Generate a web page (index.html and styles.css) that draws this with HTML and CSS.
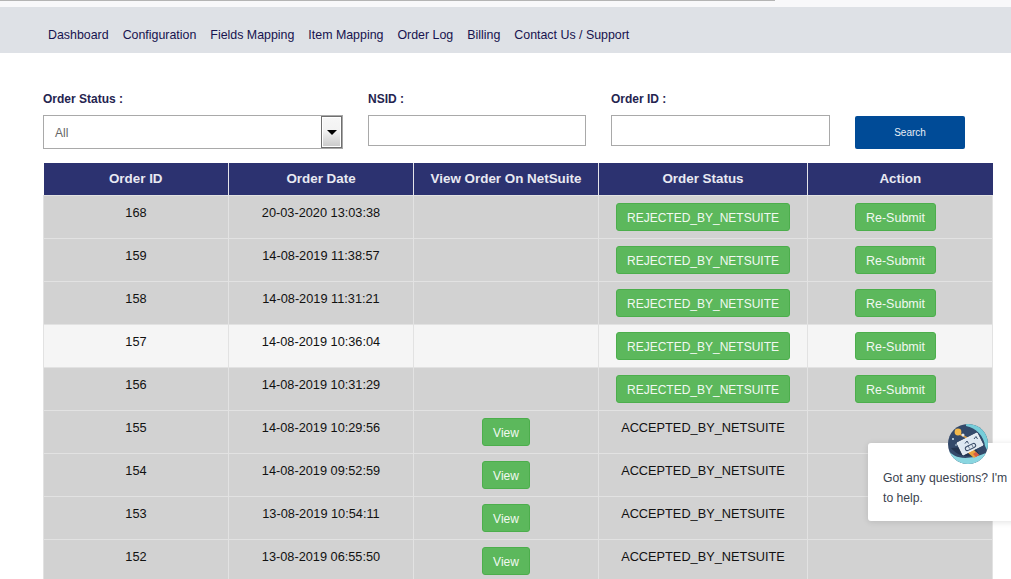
FILE: index.html
```html
<!DOCTYPE html>
<html lang="en">
<head>
<meta charset="utf-8">
<title>Order Log</title>
<link rel="stylesheet" href="styles.css">
</head>
<body>
<div class="topstrip"><div class="topline"></div></div>
<nav class="nav">
  <a>Dashboard</a><a>Configuration</a><a>Fields Mapping</a><a>Item Mapping</a><a>Order Log</a><a>Billing</a><a>Contact Us / Support</a>
</nav>
<main class="main">
  <form class="filters">
    <div class="field f-status">
      <label>Order Status :</label>
      <div class="select"><span class="select-val">All</span><span class="select-btn"><i class="arrow"></i></span></div>
    </div>
    <div class="field f-nsid">
      <label>NSID :</label>
      <div class="input"></div>
    </div>
    <div class="field f-order">
      <label>Order ID :</label>
      <div class="input"></div>
    </div>
    <div class="btn-search">Search</div>
  </form>
  <table class="orders">
    <colgroup><col class="c1"><col class="c2"><col class="c3"><col class="c4"><col class="c5"></colgroup>
    <thead><tr><th>Order ID</th><th>Order Date</th><th>View Order On NetSuite</th><th>Order Status</th><th>Action</th></tr></thead>
    <tbody>
      <tr><td>168</td><td>20-03-2020 13:03:38</td><td></td><td class="b"><span class="btn wide">REJECTED_BY_NETSUITE</span></td><td class="b"><span class="btn resub">Re-Submit</span></td></tr>
      <tr><td>159</td><td>14-08-2019 11:38:57</td><td></td><td class="b"><span class="btn wide">REJECTED_BY_NETSUITE</span></td><td class="b"><span class="btn resub">Re-Submit</span></td></tr>
      <tr><td>158</td><td>14-08-2019 11:31:21</td><td></td><td class="b"><span class="btn wide">REJECTED_BY_NETSUITE</span></td><td class="b"><span class="btn resub">Re-Submit</span></td></tr>
      <tr class="hover"><td>157</td><td>14-08-2019 10:36:04</td><td></td><td class="b"><span class="btn wide">REJECTED_BY_NETSUITE</span></td><td class="b"><span class="btn resub">Re-Submit</span></td></tr>
      <tr><td>156</td><td>14-08-2019 10:31:29</td><td></td><td class="b"><span class="btn wide">REJECTED_BY_NETSUITE</span></td><td class="b"><span class="btn resub">Re-Submit</span></td></tr>
      <tr><td>155</td><td>14-08-2019 10:29:56</td><td class="b"><span class="btn view">View</span></td><td>ACCEPTED_BY_NETSUITE</td><td></td></tr>
      <tr><td>154</td><td>14-08-2019 09:52:59</td><td class="b"><span class="btn view">View</span></td><td>ACCEPTED_BY_NETSUITE</td><td></td></tr>
      <tr><td>153</td><td>13-08-2019 10:54:11</td><td class="b"><span class="btn view">View</span></td><td>ACCEPTED_BY_NETSUITE</td><td></td></tr>
      <tr><td>152</td><td>13-08-2019 06:55:50</td><td class="b"><span class="btn view">View</span></td><td>ACCEPTED_BY_NETSUITE</td><td></td></tr>
    </tbody>
  </table>
</main>
<aside class="chat">
  <svg class="avatar" viewBox="0 0 40 40" width="40" height="40" aria-hidden="true">
    <defs><clipPath id="av"><circle cx="20" cy="20" r="20"/></clipPath></defs>
    <g clip-path="url(#av)">
      <rect width="40" height="40" fill="#33496a"/>
      <path d="M18 0H40V28L37 22C36 12 28 4 18 2Z" fill="#76cdd9"/>
      <path d="M0 26C6 34 18 38 40 28V40H0Z" fill="#8ad6e0"/>
      <path d="M3 24C9 31 18 35 31 30L26 22Z" fill="#233450"/>
      <path d="M19 28L26 34L31 31L25 25Z" fill="#e8a23c"/>
      <path d="M25 30L28 33L31 31L28 28Z" fill="#d85b43"/>
      <path d="M10 9L19 14" stroke="#d09a4c" stroke-width="2"/>
      <circle cx="10" cy="8" r="3.400" fill="#f2b84b"/>
      <circle cx="15" cy="11" r="1.500" fill="#e3e9ee"/>
      <path d="M9 19L29 9L35 21L15 31Z" fill="#dde7f1" stroke="#f6f9fb" stroke-width="1" stroke-linejoin="round"/>
      <path d="M17 19.500l2-2.500 1.500 2.500M26 15l2-2.500 1.500 2.500" stroke="#3a4d69" stroke-width="1" fill="none"/>
      <rect x="17" y="21" width="11" height="4" rx="2" fill="none" stroke="#3a4d69" stroke-width="1" transform="rotate(-26 22.500 23)"/>
      <path d="M20 21.500l1.500 3M23.500 20l1.500 3" stroke="#3a4d69" stroke-width=".7"/>
      <circle cx="5" cy="15" r="1" fill="#cfe4ee"/>
      <circle cx="8" cy="21" r=".8" fill="#cfe4ee"/>
    </g>
  </svg>
  <p class="chat-text">Got any questions? I'm<br>to help.</p>
</aside>
</body>
</html>
```

FILE: styles.css
```css
html, body {
  margin: 0;
  padding: 0;
  height: 579px;
  overflow: hidden;
  background: #fff;
  font-family: "Liberation Sans", Arial, sans-serif;
  color: #111;
}
.topstrip {
  height: 7px;
  background: #f8f8fa;
}
.topline {
  width: 775px;
  height: 1px;
  background: #b4b4b4;
}
.nav {
  box-sizing: border-box;
  height: 46px;
  background: #dee1e6;
  display: flex;
  align-items: center;
  gap: 14px;
  padding: 9px 0 0 48px;
  font-size: 12.4px;
  color: #17134f;
}
.main {
  padding: 38px 18px 0 43px;
}
.filters {
  display: flex;
  align-items: flex-start;
  height: 72px;
}
.field label {
  display: block;
  height: 24px;
  line-height: 16px;
  font-size: 12px;
  font-weight: bold;
  color: #25244f;
}
.f-status { width: 325px; }
.f-nsid { width: 243px; }
.f-order { width: 244px; }
.select {
  box-sizing: border-box;
  width: 300px;
  height: 34px;
  border: 1px solid #a9a9a9;
  display: flex;
  justify-content: space-between;
  align-items: stretch;
}
.select-val {
  padding-left: 11px;
  line-height: 35px;
  font-size: 12px;
  color: #666;
}
.select-btn {
  box-sizing: border-box;
  width: 21px;
  border: 1px solid #6f6f6f;
  border-top-width: 2px;
  outline: 1px solid #fff;
  outline-offset: -2px;
  background: linear-gradient(#f6f6f6, #f2f2f2 45%, #c9c9c9);
  display: flex;
  justify-content: center;
  padding-top: 12px;
}
.arrow {
  width: 0;
  height: 0;
  border-left: 5px solid transparent;
  border-right: 5px solid transparent;
  border-top: 5px solid #000;
}
.input {
  box-sizing: border-box;
  height: 31px;
  border: 1px solid #a9a9a9;
}
.f-nsid .input { width: 218px; }
.f-order .input { width: 219px; }
.btn-search {
  margin-top: 25px;
  width: 110px;
  height: 33px;
  line-height: 33px;
  text-align: center;
  background: #004b97;
  border-radius: 2px;
  color: #e8eef6;
  font-size: 10px;
}
.orders {
  table-layout: fixed;
  border-collapse: collapse;
  width: 950px;
  font-size: 12.75px;
}
.c1, .c2, .c3, .c5 { width: 185px; }
.c4 { width: 209px; }
.orders th {
  box-sizing: border-box;
  height: 32px;
  padding: 0;
  background: #2c3270;
  color: #e8e9f2;
  font-size: 13.4px;
  font-weight: bold;
  text-align: center;
  border-left: 1px solid #e4e4ea;
  border-right: 1px solid #e4e4ea;
}
.orders th:first-child { border-left: 0; }
.orders th:last-child { border-right: 0; }
.orders td {
  height: 43px;
  padding: 9px 0 0;
  box-sizing: border-box;
  background: #d2d2d2;
  border: 1px solid #e2e2e2;
  text-align: center;
  vertical-align: top;
  line-height: 15px;
  color: #111;
}
.orders td.b { padding-top: 7px; }
.orders tr.hover td { background: #f5f5f5; }
.btn {
  display: inline-block;
  box-sizing: border-box;
  height: 28px;
  line-height: 28px;
  background: #5cb85c;
  border: 1px solid #4cae4c;
  border-radius: 3px;
  color: #f1f8f1;
  font-size: 12px;
}
.wide { width: 174px; }
.resub { width: 81px; margin-right: 9px; font-size: 12.5px; }
.view { width: 48px; }
.chat {
  position: absolute;
  left: 868px;
  top: 443px;
  width: 190px;
  height: 78px;
  box-sizing: border-box;
  padding: 25px 0 0 15px;
  background: #fff;
  border-radius: 3px;
  box-shadow: 0 1px 6px rgba(0,0,0,.12);
}
.avatar {
  position: absolute;
  left: 80px;
  top: -19px;
}
.chat-text {
  margin: 0;
  font-size: 12.2px;
  line-height: 20px;
  color: #3a424e;
  white-space: nowrap;
}
```
